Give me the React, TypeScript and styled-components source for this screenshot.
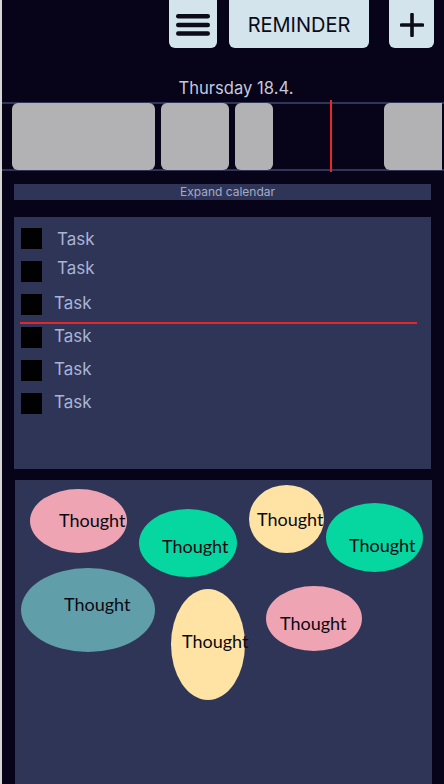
import styled, { createGlobalStyle } from "styled-components";

const GlobalStyle = createGlobalStyle`
	html, body {
		margin: 0;
		padding: 0;
		background-color: #070318;
		overflow-x: hidden;
	}
	body {
		font-family: "Inter", "Liberation Sans", sans-serif;
	}
`;

const Page = styled.div`
	min-height: 784px;
	border-left: 2px solid #d6d6d6;
	display: flex;
	flex-direction: column;
	background-color: #070318;
`;

const Toolbar = styled.div`
	display: flex;
	justify-content: flex-end;
	gap: 12px;
	padding-right: 10px;
	height: 48px;
`;

const ToolButton = styled.button<{ $width: number; $gapAfter?: number }>`
	width: ${(p) => p.$width}px;
	height: 48px;
	margin-right: ${(p) => p.$gapAfter || 0}px;
	border: none;
	border-radius: 0 0 6px 6px;
	background-color: #d3e4ec;
	color: #0c0b18;
	font-family: "Inter", "Liberation Sans", sans-serif;
	font-size: 20px;
	padding: 2px 0 0;
	display: flex;
	align-items: center;
	justify-content: center;
	cursor: pointer;
`;

const DateLabel = styled.div`
	margin-top: 30px;
	padding-left: 26px;
	text-align: center;
	font-size: 16.6px;
	line-height: 20px;
	color: #c3c9de;
`;

const Strip = styled.div`
	position: relative;
	margin-top: 4px;
	height: 65px;
	border-top: 2px solid #2f3556;
	border-bottom: 2px solid #2f3556;
	display: flex;
	padding-left: 10px;
	gap: 6px;
`;

const Slot = styled.div<{ $width: number; $skip?: number; $cut?: boolean }>`
	flex: none;
	width: ${(p) => p.$width}px;
	margin: -1px 0 -1px ${(p) => p.$skip || 0}px;
	background-color: #b2b2b5;
	border-radius: ${(p) => (p.$cut ? "6px 0 0 6px" : "6px")};
`;

const NowMarker = styled.div`
	position: absolute;
	left: 328px;
	top: -4px;
	bottom: -3px;
	width: 2px;
	background-color: #e8262a;
`;

const ExpandBar = styled.div`
	margin: 13px 13px 0 12px;
	height: 16px;
	background-color: #2f3556;
	color: #a3abcb;
	font-size: 12px;
	line-height: 16px;
	text-align: center;
	padding-left: 10px;
`;

const TaskPanel = styled.div`
	position: relative;
	margin: 17px 13px 0 12px;
	height: 241px;
	padding: 11px 0 0 7px;
	background-color: #2f3556;
	display: flex;
	flex-direction: column;
	gap: 12px;
`;

const TaskRow = styled.div<{ $indent: number }>`
	display: flex;
	align-items: center;
	gap: ${(p) => p.$indent}px;
	height: 21px;
`;

const Box = styled.div`
	width: 21px;
	height: 21px;
	background-color: #000;
`;

const TaskText = styled.span<{ $lift: number }>`
	font-size: 17px;
	color: #a9b3d6;
	margin-bottom: ${(p) => p.$lift * 2}px;
`;

const NowLine = styled.div`
	position: absolute;
	left: 6px;
	top: 105px;
	width: 397px;
	height: 2px;
	background-color: #e8262a;
`;

const ThoughtBoard = styled.div`
	position: relative;
	margin: 11px 12px 0 13px;
	flex: 1;
	min-height: 304px;
	background-color: #2f3556;
`;

const Bubble = styled.div<{
	$x: number;
	$y: number;
	$w: number;
	$h: number;
	$color: string;
	$tx: number;
}>`
	position: absolute;
	left: ${(p) => p.$x}px;
	top: ${(p) => p.$y}px;
	width: ${(p) => p.$w}px;
	height: ${(p) => p.$h}px;
	box-sizing: border-box;
	padding-left: ${(p) => p.$tx}px;
	border-radius: 50%;
	background-color: ${(p) => p.$color};
	display: flex;
	align-items: center;
`;

const BubbleText = styled.span<{ $dy: number }>`
	font-family: "Lato", "Liberation Sans", sans-serif;
	font-size: 18px;
	color: #0a0a12;
	white-space: nowrap;
	margin-top: ${(p) => p.$dy * 2 - 3}px;
`;

const MenuIcon = () => (
	<svg width="34" height="24" viewBox="0 0 34 24">
		<rect x="0" y="1" width="34" height="4.5" rx="2.25" fill="#0c0b18" />
		<rect x="0" y="9.7" width="34" height="4.5" rx="2.25" fill="#0c0b18" />
		<rect x="0" y="18.3" width="34" height="4.5" rx="2.25" fill="#0c0b18" />
	</svg>
);

const PlusIcon = () => (
	<svg width="24" height="24" viewBox="0 0 24 24">
		<path d="M12 1.5v21M1.5 12h21" stroke="#0c0b18" strokeWidth="3.6" strokeLinecap="round" />
	</svg>
);

const tasks = [
	{ indent: 15, lift: 0 },
	{ indent: 15, lift: 4 },
	{ indent: 12, lift: 2 },
	{ indent: 12, lift: 2 },
	{ indent: 12, lift: 2 },
	{ indent: 12, lift: 2 },
];

const PINK = "#eea4b3";
const GREEN = "#06d6a0";
const YELLOW = "#ffe3a4";
const TEAL = "#609fa9";

const thoughts = [
	{ x: 15, y: 9, w: 97, h: 64, color: PINK, tx: 29, dy: 0 },
	{ x: 124, y: 29, w: 98, h: 68, color: GREEN, tx: 23, dy: 4 },
	{ x: 234, y: 5, w: 75, h: 68, color: YELLOW, tx: 8, dy: 1 },
	{ x: 311, y: 23, w: 97, h: 69, color: GREEN, tx: 23, dy: 9 },
	{ x: 6, y: 88, w: 134, h: 84, color: TEAL, tx: 43, dy: -5 },
	{ x: 156, y: 109, w: 74, h: 111, color: YELLOW, tx: 11, dy: -2 },
	{ x: 251, y: 106, w: 96, h: 65, color: PINK, tx: 14, dy: 6 },
];

const App = () => {
	return (
		<>
			<GlobalStyle />
			<Page>
				<Toolbar>
					<ToolButton $width={48} aria-label="menu">
						<MenuIcon />
					</ToolButton>
					<ToolButton $width={140} $gapAfter={8}>
						REMINDER
					</ToolButton>
					<ToolButton $width={45} aria-label="add">
						<PlusIcon />
					</ToolButton>
				</Toolbar>

				<DateLabel>Thursday 18.4.</DateLabel>

				<Strip>
					<Slot $width={143} />
					<Slot $width={68} />
					<Slot $width={38} />
					<Slot $width={58} $skip={105} $cut />
					<NowMarker />
				</Strip>

				<ExpandBar>Expand calendar</ExpandBar>

				<TaskPanel>
					{tasks.map((t, i) => (
						<TaskRow key={i} $indent={t.indent}>
							<Box />
							<TaskText $lift={t.lift}>Task</TaskText>
						</TaskRow>
					))}
					<NowLine />
				</TaskPanel>

				<ThoughtBoard>
					{thoughts.map((b, i) => (
						<Bubble key={i} $x={b.x} $y={b.y} $w={b.w} $h={b.h} $color={b.color} $tx={b.tx}>
							<BubbleText $dy={b.dy}>Thought</BubbleText>
						</Bubble>
					))}
				</ThoughtBoard>
			</Page>
		</>
	);
};

export default App;
